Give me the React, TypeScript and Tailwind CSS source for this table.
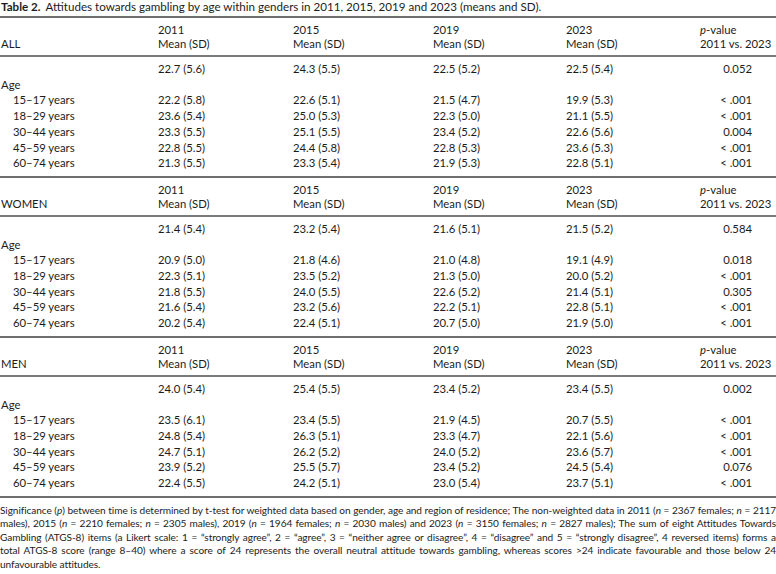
// Table 2 from a gambling-attitudes paper: means (SD) by age, split by gender.
// Three stacked blocks (ALL / WOMEN / MEN) share one column grid so the
// numbers line up across the whole table, then a justified footnote.

type Row = [string, string, string, string, string, string];

type Section = {
  label: string;
  overall: [string, string, string, string, string];
  rows: Row[];
};

const YEARS = ["2011", "2015", "2019", "2023"];

const SECTIONS: Section[] = [
  {
    label: "ALL",
    overall: ["22.7 (5.6)", "24.3 (5.5)", "22.5 (5.2)", "22.5 (5.4)", "0.052"],
    rows: [
      ["15–17 years", "22.2 (5.8)", "22.6 (5.1)", "21.5 (4.7)", "19.9 (5.3)", "< .001"],
      ["18–29 years", "23.6 (5.4)", "25.0 (5.3)", "22.3 (5.0)", "21.1 (5.5)", "< .001"],
      ["30–44 years", "23.3 (5.5)", "25.1 (5.5)", "23.4 (5.2)", "22.6 (5.6)", "0.004"],
      ["45–59 years", "22.8 (5.5)", "24.4 (5.8)", "22.8 (5.3)", "23.6 (5.3)", "< .001"],
      ["60–74 years", "21.3 (5.5)", "23.3 (5.4)", "21.9 (5.3)", "22.8 (5.1)", "< .001"],
    ],
  },
  {
    label: "WOMEN",
    overall: ["21.4 (5.4)", "23.2 (5.4)", "21.6 (5.1)", "21.5 (5.2)", "0.584"],
    rows: [
      ["15–17 years", "20.9 (5.0)", "21.8 (4.6)", "21.0 (4.8)", "19.1 (4.9)", "0.018"],
      ["18–29 years", "22.3 (5.1)", "23.5 (5.2)", "21.3 (5.0)", "20.0 (5.2)", "< .001"],
      ["30–44 years", "21.8 (5.5)", "24.0 (5.5)", "22.6 (5.2)", "21.4 (5.1)", "0.305"],
      ["45–59 years", "21.6 (5.4)", "23.2 (5.6)", "22.2 (5.1)", "22.8 (5.1)", "< .001"],
      ["60–74 years", "20.2 (5.4)", "22.4 (5.1)", "20.7 (5.0)", "21.9 (5.0)", "< .001"],
    ],
  },
  {
    label: "MEN",
    overall: ["24.0 (5.4)", "25.4 (5.5)", "23.4 (5.2)", "23.4 (5.5)", "0.002"],
    rows: [
      ["15–17 years", "23.5 (6.1)", "23.4 (5.5)", "21.9 (4.5)", "20.7 (5.5)", "< .001"],
      ["18–29 years", "24.8 (5.4)", "26.3 (5.1)", "23.3 (4.7)", "22.1 (5.6)", "< .001"],
      ["30–44 years", "24.7 (5.1)", "26.2 (5.2)", "24.0 (5.2)", "23.6 (5.7)", "< .001"],
      ["45–59 years", "23.9 (5.2)", "25.5 (5.7)", "23.4 (5.2)", "24.5 (5.4)", "0.076"],
      ["60–74 years", "22.4 (5.5)", "24.2 (5.1)", "23.0 (5.4)", "23.7 (5.1)", "< .001"],
    ],
  },
];

// label | 2011 | 2015 | 2019 | 2023 | p-value
const GRID = "grid grid-cols-[158px_135px_140px_133px_134px_1fr]";

function BodyRow({ cells, indent }: { cells: string[]; indent?: boolean }) {
  return (
    <div className={`${GRID} leading-[15.7px]`}>
      <div className={indent ? "pl-[13px]" : "pl-px"}>{cells[0]}</div>
      <div>{cells[1]}</div>
      <div>{cells[2]}</div>
      <div>{cells[3]}</div>
      <div>{cells[4]}</div>
      <div className="pr-[24px] text-right">{cells[5]}</div>
    </div>
  );
}

function TableSection({ s }: { s: Section }) {
  return (
    <div className="border-t-2 border-[#6f6f6f]">
      <div className={`${GRID} pt-[5px] pb-[4px] leading-[14px]`}>
        <div className="flex flex-col justify-end pl-px">{s.label}</div>
        {YEARS.map((y) => (
          <div key={y}>
            <div>{y}</div>
            <div>Mean (SD)</div>
          </div>
        ))}
        <div>
          <div>
            <span className="italic">p</span>-value
          </div>
          <div className="whitespace-nowrap">2011 vs. 2023</div>
        </div>
      </div>
      <div className="border-t-2 border-[#7a7a7a] pt-[4px] pb-[5px]">
        <BodyRow cells={["", ...s.overall]} />
        <BodyRow cells={["Age", "", "", "", "", ""]} />
        {s.rows.map((r) => (
          <BodyRow key={r[0]} cells={r} indent />
        ))}
      </div>
    </div>
  );
}

const FOOT_LINES = [
  <>
    Significance (<span className="italic">p</span>) between time is determined by t-test for weighted data based on
    gender, age and region of residence; The non-weighted data in 2011 (<span className="italic">n</span> = 2367
    females; <span className="italic">n</span> = 2117
  </>,
  <>
    males), 2015 (<span className="italic">n</span> = 2210 females; <span className="italic">n</span> = 2305 males),
    2019 (<span className="italic">n</span> = 1964 females; <span className="italic">n</span> = 2030 males) and 2023 (
    <span className="italic">n</span> = 3150 females; <span className="italic">n</span> = 2827 males); The sum of eight
    Attitudes Towards
  </>,
  <>
    Gambling (ATGS-8) items (a Likert scale: 1 = “strongly agree”, 2 = “agree”, 3 = “neither agree or disagree”, 4 =
    “disagree” and 5 = “strongly disagree”, 4 reversed items) forms a
  </>,
  <>
    total ATGS-8 score (range 8–40) where a score of 24 represents the overall neutral attitude towards gambling,
    whereas scores &gt;24 indicate favourable and those below 24
  </>,
];

export default function App() {
  return (
    <div className="h-[574px] w-[776px] overflow-hidden bg-white font-['Lato','Liberation_Sans',sans-serif] text-[11.3px] text-[#1c1c1c]">
      <div className="h-[16px] pl-px text-[11.6px] leading-[13px]">
        <span className="font-bold">Table 2.</span>
        <span className="ml-[5px]">
          Attitudes towards gambling by age within genders in 2011, 2015, 2019 and 2023 (means and SD).
        </span>
      </div>

      {SECTIONS.map((s) => (
        <TableSection key={s.label} s={s} />
      ))}

      <div className="border-t-2 border-[#6f6f6f] pt-[6px] text-[10.1px] leading-[13.5px] tracking-[-0.08px]">
        {FOOT_LINES.map((l, i) => (
          <div key={i} className="whitespace-nowrap text-justify [text-align-last:justify]">
            {l}
          </div>
        ))}
        <div>unfavourable attitudes.</div>
      </div>
    </div>
  );
}
